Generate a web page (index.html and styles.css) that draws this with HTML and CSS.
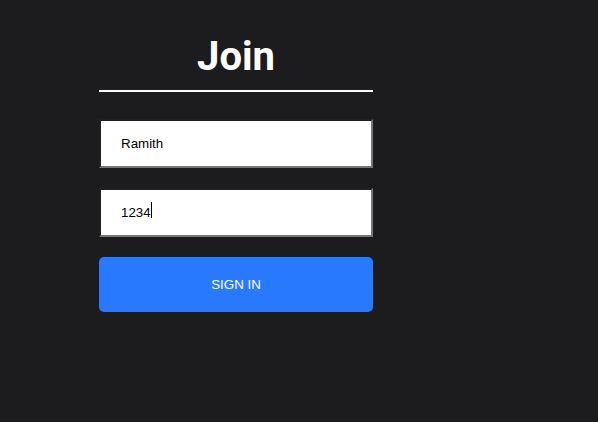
FILE: index.html
```html
<!DOCTYPE html>
<html lang="en">
<head>
<meta charset="utf-8">
<title>Join</title>
<link rel="stylesheet" href="styles.css">
</head>
<body>
<main class="page">
  <form class="join">
    <h1 class="join-title">Join</h1>
    <input class="field" type="text" value="Ramith">
    <div class="field-wrap">
      <input class="field" type="text" value="1234">
      <span class="caret"></span>
    </div>
    <button class="submit" type="button">SIGN IN</button>
  </form>
</main>
</body>
</html>
```
FILE: styles.css
```css
html, body {
  margin: 0;
  padding: 0;
  background: #1c1b1d;
}
.page {
  padding: 32px 0 0 99px;
}
.join {
  width: 274px;
  display: flex;
  flex-direction: column;
}
.join-title {
  margin: 0 0 27px;
  padding-bottom: 8px;
  border-bottom: 2px solid #ffffff;
  font-family: Roboto, "Liberation Sans", sans-serif;
  font-weight: 700;
  font-size: 40px;
  line-height: 50px;
  color: #ffffff;
  text-align: center;
}
.field-wrap {
  position: relative;
  display: flex;
  flex-direction: column;
}
.field {
  box-sizing: border-box;
  height: 49px;
  margin: 0 0 20px;
  padding: 0 20px;
  border: 2px solid;
  border-color: #202022 #767676 #767676 #202022;
  background: #ffffff;
  font-family: "Liberation Sans", Arial, sans-serif;
  font-size: 13.333px;
  color: #000000;
  outline: none;
}
.caret {
  position: absolute;
  left: 52px;
  top: 14px;
  width: 1px;
  height: 16px;
  background: #000000;
}
.submit {
  height: 55px;
  border: none;
  border-radius: 5px;
  background: #2979ff;
  color: #ffffff;
  font-family: "Liberation Sans", Arial, sans-serif;
  font-size: 13.333px;
  cursor: pointer;
}
```
